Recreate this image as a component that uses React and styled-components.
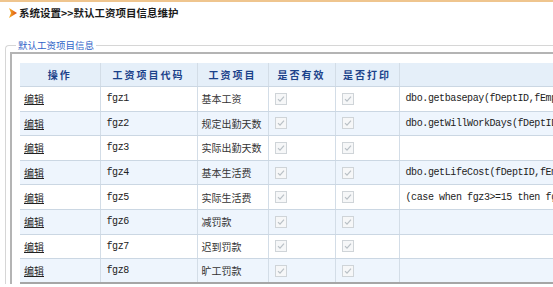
import styled, { createGlobalStyle } from "styled-components"

const Global = createGlobalStyle`
  html, body {
    margin: 0;
    padding: 0;
    background: #fff;
    overflow: hidden;
    font-family: "Noto Sans CJK SC", "Noto Sans", sans-serif;
  }
`

const rows = [
  { code: "fgz1", name: "基本工资", expr: "dbo.getbasepay(fDeptID,fEmpID,fYear,fMonth)" },
  { code: "fgz2", name: "规定出勤天数", expr: "dbo.getWillWorkDays(fDeptID,fYear,fMonth)" },
  { code: "fgz3", name: "实际出勤天数", expr: "" },
  { code: "fgz4", name: "基本生活费", expr: "dbo.getLifeCost(fDeptID,fEmpID,fYear)" },
  { code: "fgz5", name: "实际生活费", expr: "(case when fgz3>=15 then fgz4 else fgz4*fgz3/fgz2 end)" },
  { code: "fgz6", name: "减罚款", expr: "" },
  { code: "fgz7", name: "迟到罚款", expr: "" },
  { code: "fgz8", name: "旷工罚款", expr: "" },
]

function Arrow() {
  return (
    <svg width="8" height="10" viewBox="0 0 8 10">
      <defs>
        <linearGradient id="ar" x1="0" y1="0" x2="1" y2="0">
          <stop offset="0" stopColor="#f7b21e" />
          <stop offset="1" stopColor="#d9481a" />
        </linearGradient>
      </defs>
      <path d="M0 0 L8 5 L0 10 L2 5 Z" fill="url(#ar)" />
    </svg>
  )
}

function Check() {
  return (
    <Box>
      <svg width="8" height="8" viewBox="0 0 8 8">
        <path d="M1 4.2 L3 6.2 L7 1.6" fill="none" stroke="#b9c0c6" strokeWidth="1.2" />
      </svg>
    </Box>
  )
}

export default function App() {
  return (
    <>
      <Global />
      <TopBar>
        <Arrow />
        <Title>系统设置&gt;&gt;默认工资项目信息维护</Title>
      </TopBar>
      <Fieldset>
        <Legend>默认工资项目信息</Legend>
        <Panel>
          <Table>
            <colgroup>
              <col style={{ width: 80 }} />
              <col style={{ width: 97 }} />
              <col style={{ width: 71 }} />
              <col style={{ width: 67 }} />
              <col style={{ width: 64 }} />
              <col style={{ width: 320 }} />
            </colgroup>
            <thead>
              <tr>
                <Th>操作</Th>
                <Th>工资项目代码</Th>
                <Th>工资项目</Th>
                <Th>是否有效</Th>
                <Th>是否打印</Th>
                <Th></Th>
              </tr>
            </thead>
            <tbody>
              {rows.map((r, i) => (
                <Row key={r.code} $alt={i % 2 === 1}>
                  <Td><EditLink href="#">编辑</EditLink></Td>
                  <Code>{r.code}</Code>
                  <Td>{r.name}</Td>
                  <BoxCell><Check /></BoxCell>
                  <BoxCell><Check /></BoxCell>
                  <Code>{r.expr}</Code>
                </Row>
              ))}
            </tbody>
          </Table>
        </Panel>
      </Fieldset>
    </>
  )
}

const TopBar = styled.div`
  border-top: 2px solid #efc58e;
  height: 22px;
  display: flex;
  align-items: center;
  padding-left: 9px;
  gap: 2px;
`
const Title = styled.span`
  font-size: 10.5px;
  font-weight: bold;
  color: #1a1a1a;
  line-height: 14px;
`
const Fieldset = styled.fieldset`
  margin: 14px 0 0 5px;
  padding: 0 0 0 4px;
  border: 1px solid #d6d6d6;
  border-right: none;
  border-bottom: none;
  border-radius: 4px 0 0 0;
  min-inline-size: 0;
`
const Legend = styled.legend`
  margin-left: 6px;
  padding: 0 2px;
  font-size: 9.5px;
  line-height: 14px;
  color: #2f63c8;
`
const Panel = styled.div`
  border-top: 2px solid #b4b4b4;
  border-left: 2px solid #b4b4b4;
  padding: 9px 0 0 8px;
  overflow: hidden;
`
const Table = styled.table`
  border-collapse: collapse;
  table-layout: fixed;
  width: 699px;
  border-bottom: 2px solid #a6a6a6;
`
const Th = styled.th`
  height: 23px;
  padding: 0;
  background: #e5eff9;
  color: #1b428a;
  font-size: 10px;
  font-weight: bold;
  letter-spacing: 2px;
  text-align: center;
  border-right: 1px solid #d3dde7;
  border-bottom: 1px solid #cbd7e3;
`
const Row = styled.tr`
  height: 24.6px;
  background: ${p => (p.$alt ? "#eef5fd" : "#ffffff")};
`
const Td = styled.td`
  padding: 0 0 0 4px;
  font-size: 10px;
  color: #333;
  white-space: nowrap;
  overflow: hidden;
  border-right: 1px solid #d3dde7;
  border-bottom: 1px solid #cbd7e3;
`
const Code = styled(Td)`
  padding-left: 6px;
  font-family: "Liberation Mono", "DejaVu Sans Mono", monospace;
  font-size: 10px;
  letter-spacing: -0.4px;
  color: #222;
`
const BoxCell = styled(Td)`
  padding-left: 6px;
`
const EditLink = styled.a`
  color: #222;
  text-decoration: underline;
`
const Box = styled.span`
  display: flex;
  align-items: center;
  justify-content: center;
  width: 10px;
  height: 10px;
  border: 1px solid #cfd4d8;
  background: #f6f7f8;
`
